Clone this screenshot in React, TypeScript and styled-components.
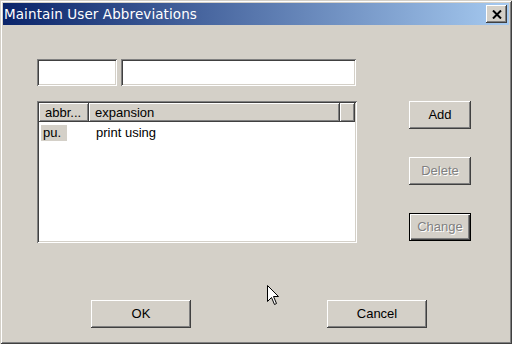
import React from 'react';
import styled, { createGlobalStyle, css } from 'styled-components';

const GlobalStyle = createGlobalStyle`
  html, body {
    margin: 0;
    padding: 0;
    background: #d4d0c8;
  }
  * {
    box-sizing: border-box;
  }
`;

const raised = css`
  box-shadow: inset -1px -1px #404040, inset 1px 1px #ffffff,
    inset -2px -2px #808080, inset 2px 2px #d4d0c8;
`;

const sunken = css`
  box-shadow: inset 1px 1px #808080, inset -1px -1px #ffffff,
    inset 2px 2px #404040, inset -2px -2px #d4d0c8;
`;

const Window = styled.div`
  position: relative;
  width: 512px;
  height: 344px;
  padding: 3px;
  background: #d4d0c8;
  display: flex;
  flex-direction: column;
  font-family: 'Liberation Sans', Arial, sans-serif;
  font-size: 13px;
  color: #000;
  box-shadow: inset 1px 1px #d4d0c8, inset -1px -1px #404040,
    inset 2px 2px #ffffff, inset -2px -2px #808080;
`;

const TitleBar = styled.div`
  height: 22px;
  display: flex;
  align-items: center;
  justify-content: space-between;
  padding: 0 2px 0 1px;
  background: linear-gradient(to right, #0a246a, #a6caf0);
`;

const Title = styled.span`
  font-family: 'DejaVu Sans', Tahoma, sans-serif;
  font-size: 13.5px;
  color: #ffffff;
  letter-spacing: 0.1px;
`;

const CloseButton = styled.div`
  width: 21px;
  height: 18px;
  background: #d4d0c8;
  display: flex;
  align-items: center;
  justify-content: center;
  ${raised};
`;

const Body = styled.div`
  flex: 1;
  display: flex;
  flex-direction: column;
  padding: 34px 0 0 34px;
`;

const Main = styled.div`
  display: grid;
  grid-template-columns: 320px 62px;
  column-gap: 52px;
`;

const LeftColumn = styled.div`
  display: flex;
  flex-direction: column;
  gap: 15px;
`;

const InputRow = styled.div`
  display: flex;
  gap: 4px;
`;

const TextField = styled.div<{ $w: number }>`
  width: ${(p) => p.$w}px;
  height: 27px;
  background: #ffffff;
  ${sunken};
`;

const ListView = styled.div`
  width: 320px;
  height: 142px;
  background: #ffffff;
  padding: 2px;
  display: flex;
  flex-direction: column;
  ${sunken};
`;

const HeaderRow = styled.div`
  display: flex;
  height: 19px;
`;

const HeaderCell = styled.div<{ $w?: number }>`
  ${(p) => (p.$w ? `width: ${p.$w}px;` : 'flex: 1;')}
  height: 19px;
  background: #d4d0c8;
  padding: 0 0 0 6px;
  display: flex;
  align-items: center;
  white-space: nowrap;
  overflow: hidden;
  ${raised};
`;

const DataRow = styled.div`
  display: flex;
  height: 16px;
  margin-top: 3px;
  align-items: center;
`;

const Cell = styled.div<{ $w: number }>`
  width: ${(p) => p.$w}px;
  padding-left: 2px;
  display: flex;
`;

const CellText = styled.span<{ $selected?: boolean }>`
  height: 16px;
  line-height: 16px;
  padding: 0 6px 0 2px;
  background: ${(p) => (p.$selected ? '#d4d0c8' : 'transparent')};
`;

const RightColumn = styled.div`
  display: flex;
  flex-direction: column;
  gap: 28px;
  padding-top: 42px;
`;

const Button = styled.div<{ $w?: number; $disabled?: boolean; $default?: boolean }>`
  width: ${(p) => p.$w ?? 62}px;
  height: 28px;
  display: flex;
  align-items: center;
  justify-content: center;
  padding-bottom: 1px;
  background: #d4d0c8;
  color: ${(p) => (p.$disabled ? '#808080' : '#000000')};
  text-shadow: ${(p) => (p.$disabled ? '1px 1px #ffffff' : 'none')};
  box-shadow: ${(p) =>
    p.$default
      ? 'inset 1px 1px #000, inset -1px -1px #000, inset 2px 2px #fff, inset -2px -2px #404040, inset -3px -3px #808080'
      : 'inset -1px -1px #404040, inset 1px 1px #ffffff, inset -2px -2px #808080, inset 2px 2px #d4d0c8'};
`;

const Footer = styled.div`
  display: flex;
  gap: 136px;
  margin-top: 57px;
  padding-left: 54px;
`;

const Cursor = styled.svg`
  position: absolute;
  left: 267px;
  top: 285px;
`;

export default function App() {
  return (
    <>
      <GlobalStyle />
      <Window>
        <TitleBar>
          <Title>Maintain User Abbreviations</Title>
          <CloseButton>
            <svg width="10" height="9" viewBox="0 0 10 9">
              <path d="M1 0.5 L9 8.5 M9 0.5 L1 8.5" stroke="#000" strokeWidth="2" />
            </svg>
          </CloseButton>
        </TitleBar>
        <Body>
          <Main>
            <LeftColumn>
              <InputRow>
                <TextField $w={80} />
                <TextField $w={235} />
              </InputRow>
              <ListView>
                <HeaderRow>
                  <HeaderCell $w={50}>abbr...</HeaderCell>
                  <HeaderCell $w={251}>expansion</HeaderCell>
                  <HeaderCell />
                </HeaderRow>
                <DataRow>
                  <Cell $w={53}>
                    <CellText $selected>pu.</CellText>
                  </Cell>
                  <Cell $w={250}>
                    <CellText>print using</CellText>
                  </Cell>
                </DataRow>
              </ListView>
            </LeftColumn>
            <RightColumn>
              <Button>Add</Button>
              <Button $disabled>Delete</Button>
              <Button $disabled $default>Change</Button>
            </RightColumn>
          </Main>
          <Footer>
            <Button $w={100}>OK</Button>
            <Button $w={100}>Cancel</Button>
          </Footer>
        </Body>
        <Cursor width="12" height="20" viewBox="0 0 12 20">
          <path
            d="M0.5 0.5 L0.5 16.5 L4.5 12.5 L7.5 19.5 L9.5 18.5 L6.5 11.5 L11.5 11.5 Z"
            fill="#fff"
            stroke="#000"
            strokeWidth="1"
          />
        </Cursor>
      </Window>
    </>
  );
}
